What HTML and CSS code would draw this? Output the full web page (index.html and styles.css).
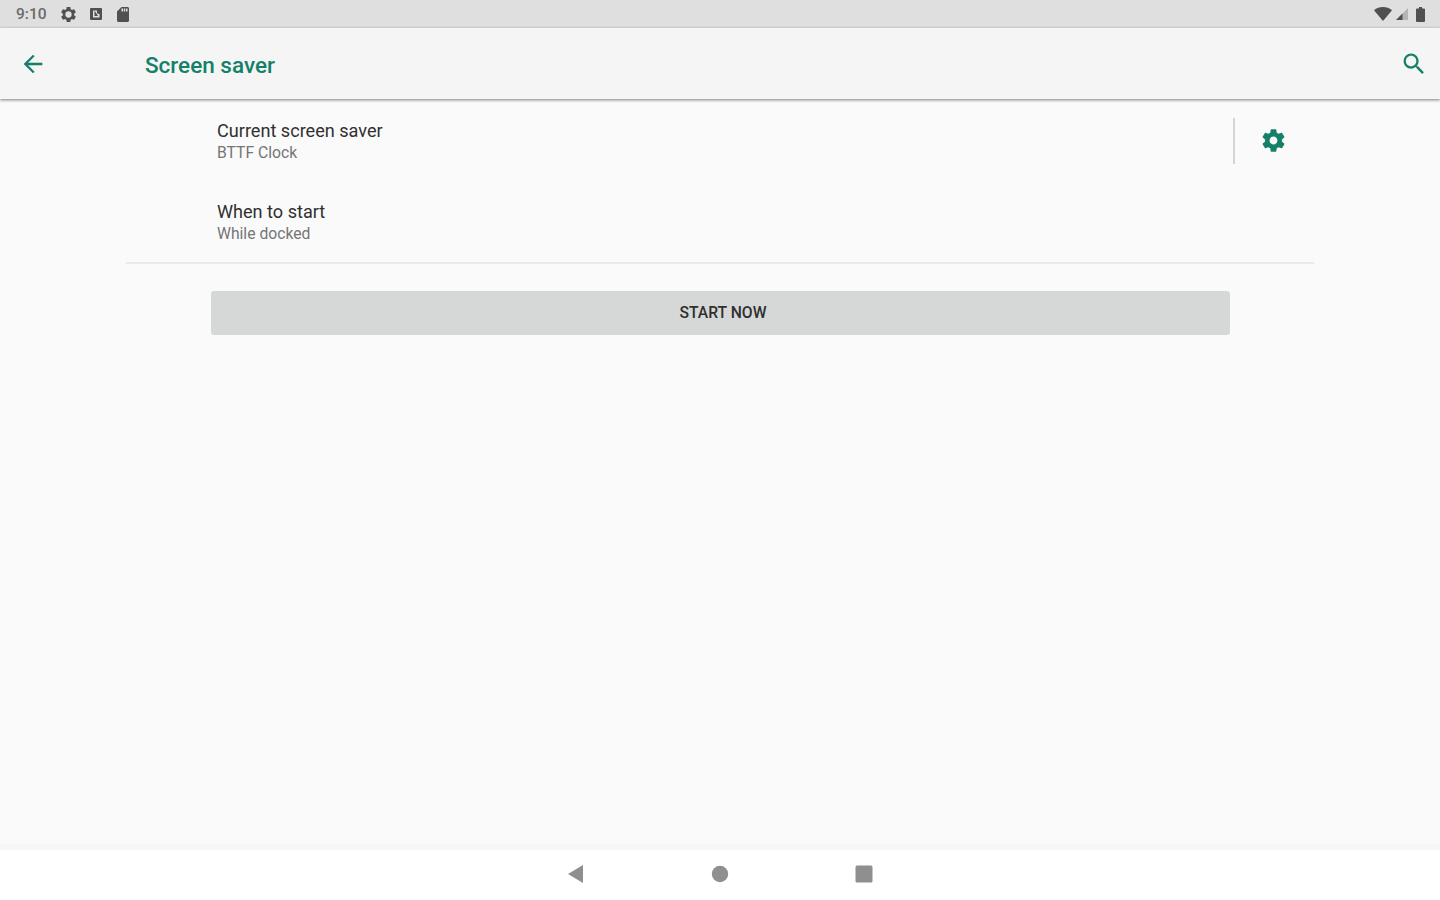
FILE: index.html
```
<!DOCTYPE html>
<html lang="en">
<head>
    <meta charset="UTF-8">
    <meta name="viewport" content="width=device-width, initial-scale=1.0">
    <title>Screen saver</title>
    <link rel="stylesheet" href="styles.css">
</head>
<body>
    <!-- Status bar -->
    <div class="status-bar">
        <div class="status-left">
            <span class="clock">9:10</span>
            <svg class="status-gear" viewBox="2 2 20 20"><path fill-rule="evenodd" d="M19.43 12.98c.04-.32.07-.64.07-.98s-.03-.66-.07-.98l2.11-1.65c.19-.15.24-.42.12-.64l-2-3.46c-.12-.22-.39-.3-.61-.22l-2.49 1c-.52-.4-1.08-.73-1.69-.98l-.38-2.65C14.46 2.18 14.25 2 14 2h-4c-.25 0-.46.18-.49.42l-.38 2.65c-.61.25-1.17.59-1.69.98l-2.49-1c-.23-.09-.49 0-.61.22l-2 3.46c-.13.22-.07.49.12.64l2.11 1.65c-.04.32-.07.65-.07.98s.03.66.07.98l-2.11 1.65c-.19.15-.24.42-.12.64l2 3.46c.12.22.39.3.61.22l2.49-1c.52.4 1.08.73 1.69.98l.38 2.65c.03.24.24.42.49.42h4c.25 0 .46-.18.49-.42l.38-2.65c.61-.25 1.17-.59 1.69-.98l2.49 1c.23.09.49 0 .61-.22l2-3.46c.12-.22.07-.49-.12-.64l-2.11-1.65zM12 16.2a4.2 4.2 0 1 1 0-8.400 4.2 4.2 0 0 1 0 8.400z"/></svg>
            <svg class="status-app" viewBox="0 0 12 12"><path fill-rule="evenodd" d="M1 0h10a1 1 0 0 1 1 1v10a1 1 0 0 1-1 1H1a1 1 0 0 1-1-1V1a1 1 0 0 1 1-1zM3 2.500v7h6.500V6L7 5.500V2.500z"/><path d="M4.500 2.500L8 8H4.500z"/></svg>
            <svg class="status-card" viewBox="4 2 16 20"><path fill-rule="evenodd" d="M18 2h-8L4 8v12c0 1.100.9 2 2 2h12c1.100 0 2-.9 2-2V4c0-1.100-.9-2-2-2zM12 8h-2V4h2v4zm3 0h-2V4h2v4zm3 0h-2V4h2v4z"/></svg>
        </div>
        <div class="status-right">
            <svg class="wifi" viewBox="0 0 18 14"><path d="M9 14L0 3.200C2.500 1 5.600 0 9 0s6.500 1 9 3.200z"/></svg>
            <svg class="signal" viewBox="0 0 12 12"><path class="signal-empty" d="M0 12L12 0v12z"/><path d="M0 12l6.500-6.500V12z"/></svg>
            <svg class="battery" viewBox="0 0 9 15"><path d="M3 0h3v1.600h2a1 1 0 0 1 1 1V14a1 1 0 0 1-1 1H1a1 1 0 0 1-1-1V2.600a1 1 0 0 1 1-1h2z"/></svg>
        </div>
    </div>

    <!-- App bar -->
    <header class="app-bar">
        <button class="icon-button back" aria-label="Back">
            <svg viewBox="0 0 24 24"><path d="M20 11H7.830l5.590-5.590L12 4l-8 8 8 8 1.410-1.410L7.830 13H20v-2z"/></svg>
        </button>
        <h1>Screen saver</h1>
        <button class="icon-button search" aria-label="Search">
            <svg viewBox="0 0 24 24"><path d="M15.500 14h-.79l-.28-.27A6.471 6.471 0 0 0 16 9.500 6.500 6.500 0 1 0 9.500 16c1.610 0 3.090-.59 4.230-1.570l.27.280v.790l5 4.990L20.490 19l-4.990-5zm-6 0C7.010 14 5 11.990 5 9.500S7.010 5 9.500 5 14 7.010 14 9.500 11.990 14 9.500 14z"/></svg>
        </button>
    </header>

    <main class="content">
        <div class="preference">
            <div class="preference-text">
                <div class="preference-title">Current screen saver</div>
                <div class="preference-summary">BTTF Clock</div>
            </div>
            <button class="settings-button" aria-label="Settings">
                <svg viewBox="0 0 24 24"><path d="M19.430 12.980c.04-.32.07-.64.07-.98s-.03-.66-.07-.98l2.110-1.650c.19-.15.24-.42.12-.64l-2-3.460c-.12-.22-.39-.3-.61-.22l-2.490 1c-.52-.4-1.080-.73-1.690-.98l-.38-2.650C14.460 2.180 14.250 2 14 2h-4c-.25 0-.46.18-.49.42l-.38 2.650c-.61.25-1.170.59-1.690.98l-2.490-1c-.23-.09-.49 0-.61.22l-2 3.460c-.13.22-.07.49.12.64l2.110 1.650c-.04.32-.07.65-.07.98s.03.66.07.98l-2.110 1.650c-.19.15-.24.42-.12.64l2 3.460c.12.22.39.3.61.22l2.490-1c.52.4 1.080.73 1.690.98l.38 2.650c.03.24.24.42.49.42h4c.25 0 .46-.18.49-.42l.38-2.650c.61-.25 1.170-.59 1.690-.98l2.490 1c.23.09.49 0 .61-.22l2-3.460c.12-.22.07-.49-.12-.64l-2.110-1.650zM12 15.500c-1.930 0-3.500-1.570-3.500-3.500s1.570-3.500 3.500-3.500 3.500 1.570 3.500 3.500-1.570 3.500-3.500 3.500z"/></svg>
            </button>
        </div>
        <div class="preference">
            <div class="preference-text">
                <div class="preference-title">When to start</div>
                <div class="preference-summary">While docked</div>
            </div>
        </div>
        <div class="start-section">
            <button class="start-button">START NOW</button>
        </div>
    </main>

    <!-- Navigation bar -->
    <nav class="nav-bar">
        <svg viewBox="0 0 20 20"><path d="M2 10L17 1v18z"/></svg>
        <svg viewBox="0 0 20 20"><circle cx="10" cy="10" r="8.200"/></svg>
        <svg viewBox="0 0 20 20"><rect x="1.500" y="1.500" width="17" height="17" rx="1.500"/></svg>
    </nav>
</body>
</html>
```
FILE: styles.css
```
* {
    box-sizing: border-box;
}

body {
    margin: 0;
    height: 100vh;
    display: flex;
    flex-direction: column;
    background-color: #fafafa;
    font-family: Roboto, sans-serif;
    color: #333;
    overflow: hidden;
}

svg {
    display: block;
    fill: currentColor;
}

button {
    border: none;
    padding: 0;
    background: transparent;
    font-family: inherit;
    cursor: pointer;
}

/* Status bar */
.status-bar {
    height: 28px;
    flex-shrink: 0;
    padding: 0 15px 0 16px;
    display: flex;
    justify-content: space-between;
    align-items: center;
    background-color: #dfdfdf;
    color: #505050;
}

.status-left,
.status-right {
    display: flex;
    align-items: center;
}

.clock {
    width: 45px;
    font-size: 15.500px;
    font-weight: 500;
    line-height: 28px;
    color: #6b6b6b;
}

.status-gear {
    width: 15px;
    height: 15px;
    margin-right: 14px;
}

.status-app {
    width: 12px;
    height: 12px;
    margin-right: 14px;
}

.status-card {
    width: 14px;
    height: 15px;
}

.wifi {
    width: 18px;
    height: 14px;
    margin-right: 4px;
}

.signal {
    width: 12px;
    height: 12px;
    margin-right: 8px;
}

.signal-empty {
    fill: #b5b5b5;
}

.battery {
    width: 9px;
    height: 15px;
}

/* App bar */
.app-bar {
    height: 71px;
    flex-shrink: 0;
    padding: 0 12px 0 19px;
    display: flex;
    align-items: center;
    background-color: #f5f5f5;
    color: #148068;
    box-shadow: 0 1px 3px rgba(0, 0, 0, 0.5);
    z-index: 1;
}

h1 {
    flex: 1;
    margin: 2px 0 0;
    font-size: 22.500px;
    font-weight: 500;
    line-height: 30px;
}

.icon-button {
    color: inherit;
}

.icon-button svg {
    width: 28px;
    height: 28px;
}

.back {
    width: 126px;
}

/* Preferences */
.content {
    flex: 1;
    padding: 1px 126px 0;
}

.preference {
    height: 81px;
    padding: 0 27px 0 91px;
    display: flex;
    justify-content: space-between;
    align-items: center;
}

.preference-text {
    padding-top: 2px;
}

.preference-title {
    font-size: 18.100px;
    line-height: 23px;
    color: #303030;
}

.preference-summary {
    font-size: 15.700px;
    line-height: 22px;
    color: #757575;
}

.settings-button {
    height: 46px;
    padding-left: 25px;
    border-left: 2px solid #d4d4d4;
    color: #148068;
}

.settings-button svg {
    width: 27px;
    height: 27px;
}

.start-section {
    padding: 27px 84px 0 85px;
    border-top: 2px solid #e9e9e9;
}

.start-button {
    display: block;
    width: 100%;
    height: 44px;
    padding: 0 0 1px 5px;
    border-radius: 3px;
    background-color: #d6d8d7;
    color: #303030;
    font-size: 15.700px;
    font-weight: 500;
}

/* Navigation bar */
.nav-bar {
    height: 56px;
    flex-shrink: 0;
    padding-bottom: 3px;
    border-top: 6px solid #f6f6f6;
    display: flex;
    justify-content: center;
    align-items: center;
    gap: 124px;
    background-color: #fff;
    color: #8f8f8f;
}

.nav-bar svg {
    width: 20px;
    height: 20px;
}
```
